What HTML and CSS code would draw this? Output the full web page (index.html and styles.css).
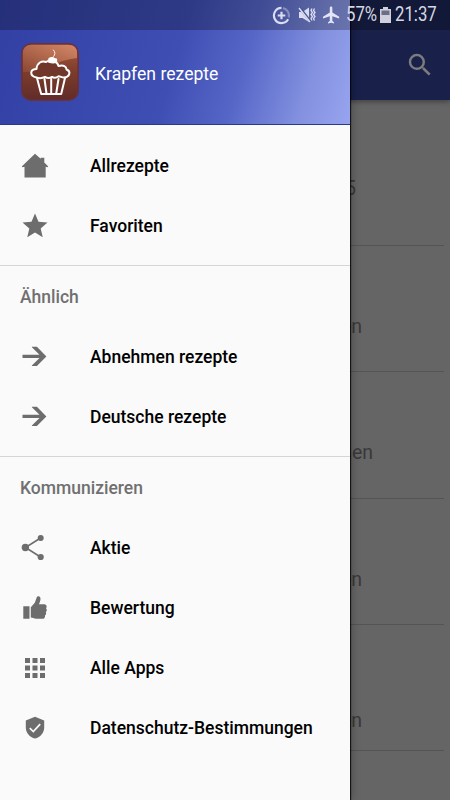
FILE: index.html
```html
<!DOCTYPE html>
<html lang="de">
<head>
<meta charset="utf-8">
<title>Krapfen rezepte</title>
<link rel="stylesheet" href="styles.css">
</head>
<body>
<div class="screen">
  <header class="appbar">
    <svg class="search" viewBox="0 0 24 24"><path d="M15.5 14h-.79l-.28-.27A6.47 6.47 0 0 0 16 9.5 6.5 6.5 0 1 0 9.5 16c1.61 0 3.09-.59 4.23-1.57l.27.28v.79l5 4.99L20.49 19l-4.99-5zm-6 0C7.01 14 5 11.99 5 9.5S7.01 5 9.5 5 14 7.01 14 9.5 11.99 14 9.5 14z"/></svg>
  </header>
  <main class="list">
    <div class="row first"><span class="t1">5</span></div>
    <div class="row"><span class="t2">en</span></div>
    <div class="row"><span class="t3">nen</span></div>
    <div class="row"><span class="t2">en</span></div>
    <div class="row low"><span class="t2">en</span></div>
  </main>

  <aside class="drawer">
    <div class="brand">
      <svg class="logo" viewBox="0 0 60 60">
        <defs>
          <linearGradient id="base" x1="0" y1="0" x2="0" y2="1"><stop offset="0" stop-color="#a9583e"/><stop offset=".5" stop-color="#7c3c2b"/><stop offset="1" stop-color="#602c28"/></linearGradient>
          <linearGradient id="gloss" x1="0" y1="1" x2="1" y2="0"><stop offset="0" stop-color="#8f4a35"/><stop offset="1" stop-color="#e09470"/></linearGradient>
        </defs>
        <rect x="1.8" y="1.8" width="56.4" height="56.4" rx="9.5" fill="url(#base)" stroke="#683040" stroke-width="1.6"/>
        <path d="M3 30V11q0-8 8-8h38q8 0 8 8v5C47 17 38 20 28 25 20 29 12 30 3 30z" fill="url(#gloss)" opacity=".8"/>
        <g fill="none" stroke="#fff" stroke-linecap="round" stroke-linejoin="round">
          <path d="M16.500 35.500C9 34 10 27 16.500 27 17 20.500 22 18.500 26 20c4-3 11-1.500 12.500 4 5-1.500 8 .5 8 3.500 5 2 3 7.500-2.500 8-2.500 0-3.500-1.200-5.500-1.200-2.500 2-4.500 2-6.500.6-2 1.300-5 1.300-7 0-3 1.600-5.500 1.700-8.500.6z" fill="#71372a" stroke-width="2"/>
          <path d="M17 36l4.200 16h20L45 36M24.500 37l2 14.500M31.200 37v14.500M38.500 37l-2.300 14.500" stroke-width="2"/>
          <path d="M33.500 14.500q3-3 0-6.500" stroke-width=".9"/>
          <path d="M29 16.500q3.500-2 5.500.2l2 .3v3.500q-4 1-8-.5z" fill="#fff" stroke-width="1.200"/>
        </g>
      </svg>
      <span class="name">Krapfen rezepte</span>
    </div>
    <nav>
      <div class="group">
        <a class="item"><svg viewBox="0 0 30 30"><path d="M15 2.700 1.700 15.500l1 .8 1.800-.6V26.500h21.200V15.700l1.600.6 1-.8-4-4V6.800h-3.600v1z"/></svg><span>Allrezepte</span></a>
        <a class="item"><svg viewBox="0 0 24 24"><path d="M12 17.270 18.180 21l-1.640-7.030L22 9.240l-7.190-.61L12 2 9.190 8.630 2 9.240l5.460 4.730L5.820 21z"/></svg><span>Favoriten</span></a>
      </div>
      <h2>Ähnlich</h2>
      <div class="group">
        <a class="item"><svg viewBox="0 0 30 30"><path d="M2.500 12.800h17l-7.600-7.500V4.800h5l9.500 9.600-9.500 9.600h-5v-.6l7.600-7.300h-17z"/></svg><span>Abnehmen rezepte</span></a>
        <a class="item"><svg viewBox="0 0 30 30"><path d="M2.500 12.800h17l-7.600-7.500V4.800h5l9.500 9.600-9.500 9.600h-5v-.6l7.600-7.300h-17z"/></svg><span>Deutsche rezepte</span></a>
      </div>
      <h2>Kommunizieren</h2>
      <div class="group">
        <a class="item"><svg viewBox="0 0 30 30"><path d="M20.500 5 5.500 14.500l15 9.500" fill="none" stroke="#6d6d6d" stroke-width="1.600"/><circle cx="5.400" cy="14.500" r="3.700"/><circle cx="20.700" cy="5" r="3"/><circle cx="20.700" cy="24" r="3.100"/></svg><span>Aktie</span></a>
        <a class="item"><svg viewBox="0 0 30 30"><path d="M3.300 13.300h6.200v12.500H3.300zM10.800 14.200l4-4.500 1.800-5c.5-1.500 2.200-1.900 3.200-.9 1.300 1.500.7 4.200-.8 7.400h5c2.500 0 3.400 2.500 2 4 1.200 1.100 1 2.800-.2 3.700.7 1.300.3 2.800-.8 3.500.3 1.900-.8 3.400-2.700 3.400h-6c-2.400 0-3.600-1.200-5.500-1.200z"/></svg><span>Bewertung</span></a>
        <a class="item"><svg viewBox="0 0 24 24"><path d="M4 8h4V4H4v4zm6 12h4v-4h-4v4zm-6 0h4v-4H4v4zm0-6h4v-4H4v4zm6 0h4v-4h-4v4zm6-10v4h4V4h-4zm-6 4h4V4h-4v4zm6 6h4v-4h-4v4zm0 6h4v-4h-4v4z"/></svg><span>Alle Apps</span></a>
        <a class="item"><svg viewBox="0 0 30 30"><path d="M15 3.800 5.800 7.400v7c0 5.200 3.900 9.900 9.200 11.100 5.300-1.200 9.200-5.900 9.200-11.100v-7z"/><path d="m9.800 15.200 3.500 3.400 6.900-7.500" fill="none" stroke="#fafafa" stroke-width="1.700"/></svg><span>Datenschutz-Bestimmungen</span></a>
      </div>
    </nav>
  </aside>

  <div class="status">
    <svg class="data" viewBox="0 0 20 20" fill="none" stroke="#d9dcf2" stroke-width="2.300"><path d="M10 2a8 8 0 1 0 7 12"/><path d="M11.500 2.200A8 8 0 0 1 17.700 12" opacity=".4"/><path d="M10 6v8M6 10h8"/></svg>
    <svg class="mute" viewBox="0 0 18 18" fill="#d9dcf2"><path d="M1 6h3.500L11 1.500v14.500L4.500 12H1z"/><path d="m1.500 1.500 11 14" stroke="#4c578f" stroke-width="2.800"/><path d="m1 2 11 14" stroke="#d9dcf2" stroke-width="1.400"/><path d="m14 2.500-1 2 1.500 2-1.500 2 1.500 2-1.500 2 1 2M16.500 2.500l-1 2 1.500 2-1.500 2 1.500 2-1.500 2 1 2" fill="none" stroke="#d9dcf2" stroke-width="1.300"/></svg>
    <svg class="plane" viewBox="2 2 20 20" fill="#e2e4f8"><path d="M21 16v-2l-8-5V3.500a1.500 1.500 0 0 0-3 0V9l-8 5v2l8-2.500V19l-2 1.500V22l3.500-1 3.500 1v-1.500L13 19v-5.500z"/></svg>
    <span class="pct">57%</span>
    <svg class="battery" viewBox="0 0 11 16"><path d="M3 0h5v2h3v14H0V2h3z" fill="#cfd0dc"/><path d="M1.500 3.500h8V8h-8z" fill="#6c6e88"/></svg>
    <span class="time">21:37</span>
  </div>
</div>
</body>
</html>
```
FILE: styles.css
```css
* { box-sizing: border-box; }
body { margin: 0; font-family: Roboto, "Liberation Sans", sans-serif; }
.screen { position: relative; width: 450px; height: 800px; overflow: hidden; background: #656565; }

.appbar { height: 100px; padding: 50px 15px 0 0; display: flex; justify-content: flex-end; align-items: flex-start; background: #19204a; box-shadow: 0 2px 5px rgba(0,0,0,.35); position: relative; }
.search { width: 30px; height: 30px; fill: #7c7c7e; }

.list { padding: 0 6px; color: #393939; font-size: 19.5px; line-height: 24px; }
.row { height: 126.300px; padding-top: 69px; border-bottom: 1px solid #545454; text-align: right; }
.row.first { height: 146px; padding-top: 77px; }
.row.low { padding-top: 84px; }
.t1 { margin-right: 88px; }
.t2 { margin-right: 82px; }
.t3 { margin-right: 71px; }

.drawer { position: absolute; left: 0; top: 0; width: 350px; height: 800px; background: #fafafa; box-shadow: 1px 0 1px rgba(0,0,0,.75), 2px 0 8px rgba(0,0,0,.25); }
.brand { height: 125px; padding: 42px 0 0 20px; display: flex; align-items: flex-start; gap: 15px; border-bottom: 1px solid #283a8c; background: linear-gradient(107deg, #3240a4 0%, #3e4eb3 50%, #5666c7 68%, #8290df 86%, #98a4ef 100%); }
.logo { width: 60px; height: 60px; }
.name { color: #fff; font-size: 17.600px; line-height: 22px; margin-top: 21px; white-space: nowrap; }

nav { padding-top: 11px; }
.group { height: 129px; }
.item { height: 60px; padding-left: 20px; display: flex; align-items: center; gap: 40px; color: #000; font-size: 17.500px; font-weight: 500; white-space: nowrap; }
.item svg { width: 30px; height: 30px; fill: #6d6d6d; }
h2 { margin: 0; height: 62px; padding-left: 20px; border-top: 1px solid #d6d6d6; color: #707070; font-size: 17.500px; font-weight: 500; line-height: 63px; }

.status { position: absolute; left: 0; top: 0; width: 450px; height: 30px; background: rgba(0,0,0,.25); display: flex; align-items: center; padding-left: 272px; color: #d6d7e3; font-size: 19.500px; line-height: 30px; white-space: nowrap; }
.data { width: 19px; height: 19px; }
.mute { width: 18px; height: 18px; margin-left: 7px; }
.plane { width: 17px; height: 18px; margin-left: 7px; }
.pct, .time { transform: scaleX(.86); transform-origin: 0 50%; }
.pct { margin-left: 6px; width: 34px; }
.battery { width: 11px; height: 16px; }
.time { margin-left: 4px; }
```
